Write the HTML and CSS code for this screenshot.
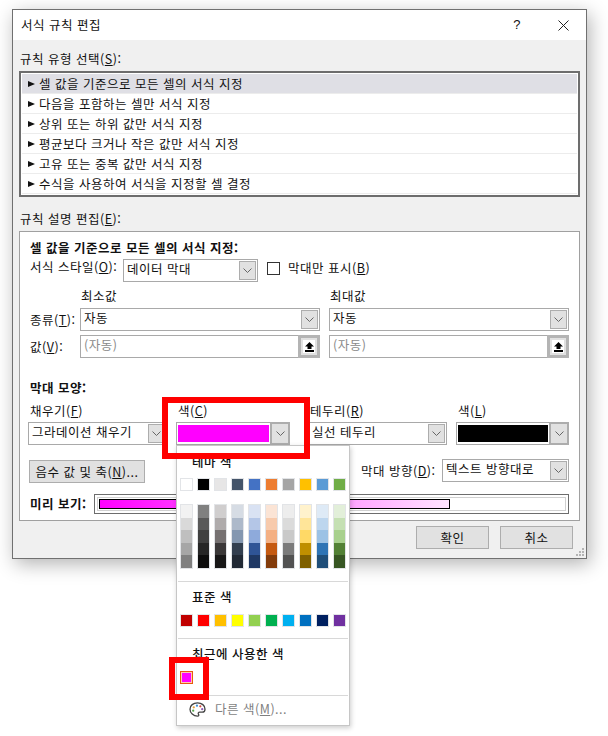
FILE: index.html
```html
<!DOCTYPE html>
<html lang="ko">
<head>
    <meta charset="UTF-8">
    <title>서식 규칙 편집</title>
    <link rel="stylesheet" href="styles.css">
</head>
<body>
    <svg class="icon-defs" width="0" height="0">
        <symbol id="chevron" viewBox="0 0 9 5"><polyline points="0.5,0.5 4.5,4.5 8.5,0.5" fill="none" stroke="#666" stroke-width="1"/></symbol>
        <symbol id="upload" viewBox="0 0 9 10"><path d="M4.5 0 L9 4.5 H6.5 V7 H2.5 V4.5 H0 Z M0 8 H9 V10 H0 Z" fill="#000"/></symbol>
    </svg>

    <div class="dialog">
        <div class="titlebar">
            <span class="title">서식 규칙 편집</span>
            <span class="title-btn help">?</span>
            <span class="title-btn">
                <svg width="11" height="11" viewBox="0 0 11 11"><path d="M0.5 0.5 L10.5 10.5 M10.5 0.5 L0.5 10.5" stroke="#222" stroke-width="1" fill="none"/></svg>
            </span>
        </div>

        <div class="body">
            <div class="group-label">규칙 유형 선택(<u>S</u>):</div>
            <ul class="rule-list">
                <li class="selected">셀 값을 기준으로 모든 셀의 서식 지정</li>
                <li>다음을 포함하는 셀만 서식 지정</li>
                <li>상위 또는 하위 값만 서식 지정</li>
                <li>평균보다 크거나 작은 값만 서식 지정</li>
                <li>고유 또는 중복 값만 서식 지정</li>
                <li>수식을 사용하여 서식을 지정할 셀 결정</li>
            </ul>

            <div class="group-label second">규칙 설명 편집(<u>E</u>):</div>
            <div class="panel">
                <div class="heading">셀 값을 기준으로 모든 셀의 서식 지정:</div>

                <div class="style-row">
                    <label class="style-label">서식 스타일(<u>O</u>):</label>
                    <div class="select style-select">
                        <span class="select-text">데이터 막대</span>
                        <span class="drop"><svg width="9" height="5"><use href="#chevron"/></svg></span>
                    </div>
                    <span class="checkbox"></span>
                    <label class="check-label">막대만 표시(<u>B</u>)</label>
                </div>

                <div class="minmax">
                    <span></span>
                    <span class="field-label">최소값</span>
                    <span class="field-label">최대값</span>

                    <label class="row-label">종류(<u>T</u>):</label>
                    <div class="select">
                        <span class="select-text">자동</span>
                        <span class="drop"><svg width="9" height="5"><use href="#chevron"/></svg></span>
                    </div>
                    <div class="select">
                        <span class="select-text">자동</span>
                        <span class="drop"><svg width="9" height="5"><use href="#chevron"/></svg></span>
                    </div>

                    <label class="row-label">값(<u>V</u>):</label>
                    <div class="select">
                        <span class="select-text muted">(자동)</span>
                        <span class="range-btn"><svg width="9" height="10"><use href="#upload"/></svg></span>
                    </div>
                    <div class="select">
                        <span class="select-text muted">(자동)</span>
                        <span class="range-btn"><svg width="9" height="10"><use href="#upload"/></svg></span>
                    </div>
                </div>

                <div class="heading bar-heading">막대 모양:</div>

                <div class="bar-grid">
                    <div class="bar-cell">
                        <label>채우기(<u>F</u>)</label>
                        <div class="select">
                            <span class="select-text">그라데이션 채우기</span>
                            <span class="drop"><svg width="9" height="5"><use href="#chevron"/></svg></span>
                        </div>
                    </div>
                    <div class="bar-cell">
                        <label>색(<u>C</u>)</label>
                        <div class="color-select">
                            <span class="color-fill magenta"></span>
                            <span class="color-drop"><svg width="9" height="5"><use href="#chevron"/></svg></span>
                        </div>
                    </div>
                    <div class="bar-cell">
                        <label>테두리(<u>R</u>)</label>
                        <div class="select">
                            <span class="select-text">실선 테두리</span>
                            <span class="drop"><svg width="9" height="5"><use href="#chevron"/></svg></span>
                        </div>
                    </div>
                    <div class="bar-cell">
                        <label>색(<u>L</u>)</label>
                        <div class="color-select">
                            <span class="color-fill black"></span>
                            <span class="color-drop"><svg width="9" height="5"><use href="#chevron"/></svg></span>
                        </div>
                    </div>
                </div>

                <div class="axis-row">
                    <button class="btn axis-btn">음수 값 및 축(<u>N</u>)...</button>
                    <label class="direction-label">막대 방향(<u>D</u>):</label>
                    <div class="select direction-select">
                        <span class="select-text">텍스트 방향대로</span>
                        <span class="drop"><svg width="9" height="5"><use href="#chevron"/></svg></span>
                    </div>
                </div>

                <div class="preview-row">
                    <span class="preview-label">미리 보기:</span>
                    <div class="preview">
                        <div class="preview-inner"><div class="preview-bar"></div></div>
                    </div>
                </div>
            </div>

            <div class="footer">
                <button class="btn">확인</button>
                <button class="btn">취소</button>
            </div>
        </div>

        <svg class="gripper" width="9" height="9" viewBox="0 0 9 9" fill="#b4b4b4">
            <rect x="6" y="0" width="2" height="2"/>
            <rect x="3" y="3" width="2" height="2"/><rect x="6" y="3" width="2" height="2"/>
            <rect x="0" y="6" width="2" height="2"/><rect x="3" y="6" width="2" height="2"/><rect x="6" y="6" width="2" height="2"/>
        </svg>

        <div class="color-menu">
            <div class="menu-title first">테마 색</div>
            <div class="swatches theme-row" id="themeRow"></div>
            <div class="shades" id="shades"></div>
            <div class="menu-sep shades-sep"></div>
            <div class="menu-title">표준 색</div>
            <div class="swatches" id="standardRow"></div>
            <div class="menu-sep"></div>
            <div class="menu-title">최근에 사용한 색</div>
            <div class="swatches"><span class="swatch recent"></span></div>
            <div class="menu-sep"></div>
            <div class="more-colors">
                <svg width="17" height="15" viewBox="0 0 18 16">
                    <path d="M9 1 C4.5 1 1 3.6 1 7.6 C1 11.6 4.6 15 9 15 C10.6 15 10.6 13.9 10 13 C9.3 11.9 10 10.8 11.4 10.8 H14 C15.8 10.8 17 9.6 17 7.6 C17 3.6 13.5 1 9 1 Z" fill="#fff" stroke="#444" stroke-width="1.4"/>
                    <circle cx="5" cy="5.6" r="1.2" fill="#e8a13a"/>
                    <circle cx="8.4" cy="3.9" r="1.2" fill="#3f8fd6"/>
                    <circle cx="12" cy="4.6" r="1.2" fill="#d6483f"/>
                    <circle cx="14" cy="7.6" r="1.2" fill="#8e5bb5"/>
                    <circle cx="4.4" cy="9.2" r="1.2" fill="#5aa84f"/>
                </svg>
                <span>다른 색(<u>M</u>)...</span>
            </div>
        </div>

        <div class="mark mark-color"></div>
        <div class="mark mark-recent"></div>
    </div>

    <script>
        const themeColors = ['#ffffff', '#000000', '#e7e6e6', '#44546a', '#4472c4', '#ed7d31', '#a5a5a5', '#ffc000', '#5b9bd5', '#70ad47'];
        const standardColors = ['#c00000', '#ff0000', '#ffc000', '#ffff00', '#92d050', '#00b050', '#00b0f0', '#0070c0', '#002060', '#7030a0'];
        const shadeColors = [
            ['#f2f2f2', '#d9d9d9', '#bfbfbf', '#a6a6a6', '#808080'],
            ['#808080', '#595959', '#404040', '#262626', '#0d0d0d'],
            ['#d0cece', '#afabab', '#767171', '#3b3838', '#181717'],
            ['#d6dce4', '#adb9ca', '#8497b0', '#333f4f', '#222a35'],
            ['#d9e2f3', '#b4c6e7', '#8eaadb', '#2f5496', '#1f3864'],
            ['#fbe4d5', '#f7caac', '#f4b083', '#c55a11', '#833c0b'],
            ['#ededed', '#dbdbdb', '#c9c9c9', '#7b7b7b', '#525252'],
            ['#fff2cc', '#ffe599', '#ffd966', '#bf8f00', '#7f6000'],
            ['#deeaf6', '#bdd6ee', '#9cc2e5', '#2e74b5', '#1f4e79'],
            ['#e2efd9', '#c5e0b3', '#a8d08d', '#538135', '#375623']
        ];

        function fillSwatches(id, colors) {
            const row = document.getElementById(id);
            colors.forEach(color => {
                const swatch = document.createElement('span');
                swatch.className = 'swatch';
                swatch.style.backgroundColor = color;
                row.appendChild(swatch);
            });
        }

        fillSwatches('themeRow', themeColors);
        fillSwatches('standardRow', standardColors);

        const shades = document.getElementById('shades');
        shadeColors.forEach(column => {
            const col = document.createElement('div');
            col.className = 'shade-col';
            column.forEach(color => {
                const cell = document.createElement('span');
                cell.style.backgroundColor = color;
                col.appendChild(cell);
            });
            shades.appendChild(col);
        });
    </script>
</body>
</html>
```

FILE: styles.css
```css
* {
    box-sizing: border-box;
}

html, body {
    height: 100%;
}

body {
    margin: 0;
    padding: 9px 0 0 12px;
    background: #fff;
    overflow: hidden;
    font-family: "Noto Sans CJK KR", "Noto Sans", sans-serif;
    font-size: 12.5px;
    letter-spacing: 0.5px;
    line-height: 16px;
    color: #111;
}

u {
    text-decoration: underline;
}

label {
    white-space: nowrap;
}

.icon-defs {
    position: absolute;
}

.dialog {
    position: relative;
    width: 575px;
    height: 550px;
    border: 1px solid #707070;
    background: #f0f0f0;
    box-shadow: 3px 5px 18px rgba(0, 0, 0, 0.3);
}

.titlebar {
    display: flex;
    align-items: center;
    height: 30px;
    padding-left: 8px;
    background: #fff;
}

.title {
    flex: 1;
}

.title-btn {
    display: flex;
    align-items: center;
    justify-content: center;
    width: 46px;
    height: 30px;
}

.help {
    font-family: "Liberation Sans", sans-serif;
    font-size: 13px;
}

.body {
    padding: 11px 6px 0;
}

.group-label {
    padding-left: 1px;
}

.group-label.second {
    margin-top: 14px;
}

.rule-list {
    list-style: none;
    margin: 4px 0 0;
    padding: 1px 1px 0;
    height: 126px;
    border: 2px solid #6d6d6d;
    background: #fff;
}

.rule-list li {
    display: flex;
    align-items: center;
    height: 20px;
    padding-left: 6px;
    border-bottom: 1px solid #ececec;
}

.rule-list li::before {
    content: "";
    margin-right: 4px;
    border-left: 7px solid #111;
    border-top: 3.5px solid transparent;
    border-bottom: 3.5px solid transparent;
}

.rule-list .selected {
    background: #dfdfe5;
}

.panel {
    margin-top: 4px;
    height: 290px;
    padding: 8px 10px 6px;
    border: 1px solid #a0a0a0;
    background: #fff;
}

.heading {
    font-weight: 700;
    height: 16px;
}

.style-row {
    display: flex;
    align-items: flex-start;
    margin-top: 3px;
}

.style-label {
    width: 93px;
}

.select {
    display: flex;
    align-items: center;
    justify-content: space-between;
    height: 23px;
    padding-left: 3px;
    border: 1px solid #a9a9a9;
    background: #fff;
}

.select-text {
    margin-top: -3px;
    white-space: nowrap;
}

.muted {
    color: #8a8a8a;
}

.drop {
    display: flex;
    align-items: center;
    justify-content: center;
    flex: none;
    width: 17px;
    height: 19px;
    margin-right: 1px;
    border: 1px solid #adadad;
    background: #e1e1e1;
}

.range-btn {
    display: flex;
    align-items: center;
    justify-content: center;
    flex: none;
    width: 22px;
    height: 23px;
    margin-right: -1px;
    border: 3px solid #b4b4b4;
    outline: 2px solid #e1e1e1;
    outline-offset: -5px;
    background: #fff;
}

.style-select {
    width: 135px;
}

.checkbox {
    width: 13px;
    height: 13px;
    margin: 3px 8px 0 9px;
    border: 1px solid #333;
    background: #fff;
}

.check-label {
    margin-top: 1px;
}

.minmax {
    display: grid;
    grid-template-columns: 41px 240px 240px;
    column-gap: 9px;
    row-gap: 4px;
    margin-top: 6px;
}

.field-label {
    padding-left: 1px;
}

.row-label {
    align-self: center;
}

.bar-heading {
    margin-top: 22px;
}

.bar-grid {
    display: grid;
    grid-template-columns: 139px 123px 139px 113px;
    column-gap: 9px;
    margin: 7px 0 0 -2px;
}

.bar-cell label {
    display: block;
    height: 19px;
    padding-left: 2px;
}

.color-select {
    display: flex;
    width: 114px;
    height: 23px;
    padding: 2px 0 2px 1px;
    border: 1px solid #a9a9a9;
    background: #fff;
}

.bar-cell:last-child .color-select {
    width: 113px;
}

.color-fill {
    flex: 1;
}

.magenta {
    background: #ff00ff;
}

.black {
    background: #000;
}

.color-drop {
    display: flex;
    align-items: center;
    justify-content: center;
    flex: none;
    width: 20px;
    height: 23px;
    margin: -3px -1px -3px 1px;
    border: 2px solid #adadad;
    background: #e1e1e1;
}

.axis-row {
    display: flex;
    align-items: flex-start;
    margin-top: 14px;
}

.btn {
    height: 23px;
    padding: 0;
    border: 1px solid #adadad;
    background: #e1e1e1;
    color: #111;
    font: inherit;
    letter-spacing: inherit;
}

.axis-btn {
    width: 116px;
    margin: 1px 0 0 -1px;
}

.direction-label {
    margin: 4px 0 0 216px;
}

.direction-select {
    width: 127px;
    margin-left: auto;
}

.preview-row {
    display: flex;
    align-items: center;
    margin-top: 11px;
}

.preview-label {
    font-weight: 700;
}

.preview {
    width: 475px;
    height: 20px;
    margin-left: auto;
    padding: 2px;
    border: 1px solid #6d6d6d;
    background: #fff;
}

.preview-inner {
    height: 14px;
    padding: 1px;
    border: 1px solid #d0d0d0;
}

.preview-bar {
    width: 351px;
    height: 10px;
    border: 1px solid #000;
    background: linear-gradient(to right, #ff00ff, #ffe4ff);
}

.footer {
    display: flex;
    justify-content: flex-end;
    gap: 11px;
    padding: 5px 7px 0 0;
}

.footer .btn {
    width: 73px;
}

.gripper {
    position: absolute;
    right: 1px;
    bottom: 1px;
}

.color-menu {
    position: absolute;
    left: 163px;
    top: 435px;
    width: 174px;
    height: 281px;
    border: 1px solid #c6c6c6;
    background: #fff;
    box-shadow: 1px 2px 5px rgba(0, 0, 0, 0.2);
}

.menu-title {
    height: 16px;
    margin-top: 7px;
    padding-left: 15px;
    font-weight: 500;
}

.menu-title.first {
    margin-top: 8px;
}

.swatches {
    display: flex;
    gap: 4px;
    margin: 9px 0 0 3px;
}

.theme-row {
    margin-top: 8px;
}

.swatch {
    width: 13px;
    height: 13px;
    border: 1px solid #e2e4e7;
}

.recent {
    border-color: #e8590c;
    outline: 1px solid #ffc8b0;
    outline-offset: -2px;
    background: #ff00ff;
}

.shades {
    display: flex;
    gap: 4px;
    margin: 13px 0 0 3px;
}

.shade-col {
    display: flex;
    flex-direction: column;
    width: 13px;
    height: 65px;
    border: 1px solid #e2e4e7;
}

.shade-col span {
    flex: 1;
}

.menu-sep {
    height: 1px;
    margin: 11px 1px 0;
    background: #d8d8d8;
}

.shades-sep {
    margin-top: 12px;
}

.more-colors {
    display: flex;
    align-items: center;
    margin: 5px 0 0 12px;
    color: #7f7f7f;
}

.more-colors span {
    margin-left: 9px;
}

.mark {
    position: absolute;
    border: 6px solid #ff0000;
}

.mark-color {
    left: 149px;
    top: 387px;
    width: 148px;
    height: 62px;
}

.mark-recent {
    left: 156px;
    top: 647px;
    width: 40px;
    height: 43px;
}
```
